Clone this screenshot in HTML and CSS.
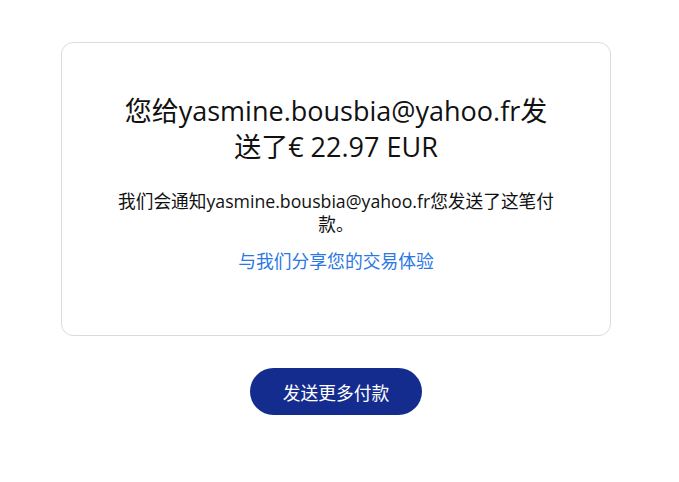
FILE: index.html
```html
<!DOCTYPE html>
<html lang="zh-CN">
<head>
<meta charset="utf-8">
<title>付款已发送</title>
<link rel="stylesheet" href="styles.css">
</head>
<body>
<main class="page">
  <section class="card">
    <h1 class="title">您给yasmine.bousbia@yahoo.fr发送了€ 22.97 EUR</h1>
    <p class="note">我们会通知yasmine.bousbia@yahoo.fr您发送了这笔付款。</p>
    <a class="feedback" href="#">与我们分享您的交易体验</a>
  </section>
  <div class="actions">
    <a class="btn" href="#">发送更多付款</a>
  </div>
</main>
</body>
</html>
```

FILE: styles.css
```css
html, body {
  margin: 0;
  padding: 0;
  background: #ffffff;
}
body {
  font-family: "Open Sans", "Noto Sans CJK SC", sans-serif;
  color: #111111;
}
.page {
  width: 550px;
  margin: 42px 0 0 61px;
  display: flex;
  flex-direction: column;
  align-items: center;
}
.card {
  box-sizing: border-box;
  width: 550px;
  height: 294px;
  border: 1px solid #dcdcd6;
  border-radius: 12px;
  padding: 50px 51px 0;
  display: flex;
  flex-direction: column;
  align-items: center;
  text-align: center;
}
.title {
  margin: 0;
  font-size: 27px;
  font-weight: 400;
  line-height: 36px;
}
.note {
  margin: 25px 0 0;
  font-size: 17.7px;
  line-height: 23px;
}
.feedback {
  margin-top: 14px;
  font-size: 17.8px;
  line-height: 23px;
  color: #2a78e4;
  text-decoration: none;
}
.actions {
  margin-top: 32px;
}
.btn {
  display: flex;
  align-items: center;
  justify-content: center;
  width: 172px;
  height: 47px;
  border-radius: 24px;
  background: #142c8e;
  color: #ffffff;
  font-size: 17.8px;
  text-decoration: none;
}
```
